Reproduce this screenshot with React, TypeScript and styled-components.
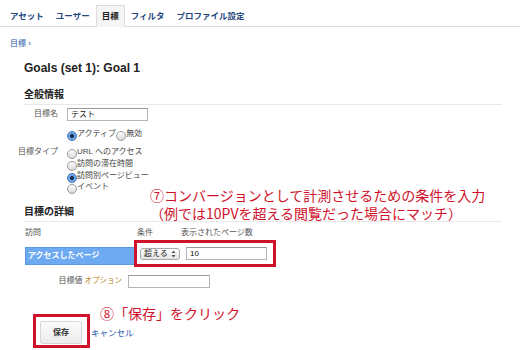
import styled, { createGlobalStyle, css } from 'styled-components';

const GlobalStyle = createGlobalStyle`
  html, body {
    margin: 0;
    padding: 0;
    background: #fff;
  }
  body {
    font-family: "Liberation Sans", "Noto Sans CJK JP", sans-serif;
    color: #333;
  }
`;

const RED = '#d0112b';
const LINK = '#2557a7';

const Page = styled.div`
  position: relative;
  width: 520px;
  height: 350px;
  overflow: hidden;
  background: #fff;
`;

const TabBar = styled.div`
  display: flex;
  align-items: flex-end;
  height: 26px;
  padding-left: 4px;
  border-bottom: 1px solid #dcdcdc;
`;

const Tab = styled.div<{ $active?: boolean }>`
  height: 20px;
  line-height: 20px;
  padding: 0 5px;
  font-size: 8.5px;
  font-weight: bold;
  color: #24467f;
  border: 1px solid transparent;
  border-bottom: none;
  ${(p) =>
    p.$active &&
    css`
      color: #222;
      background: #f5f5f5;
      border-color: #dcdcdc;
      margin-bottom: -1px;
      height: 21px;
    `}
`;

const Breadcrumb = styled.div`
  margin: 12px 0 0 10px;
  font-size: 8px;
  line-height: 10px;
  color: ${LINK};
`;

const Title = styled.h1`
  margin: 12px 0 0 24px;
  font-size: 12px;
  line-height: 14px;
  font-weight: bold;
  color: #222;
`;

const SectionHeading = styled.h2<{ $top: number }>`
  margin: ${(p) => p.$top}px 18px 0 24px;
  padding-bottom: 3px;
  font-size: 10px;
  line-height: 12px;
  font-weight: bold;
  color: #222;
  border-bottom: 1px solid #e8e8e8;
`;

const FormRow = styled.div<{ $top: number; $labelWidth?: number; $gap?: number }>`
  display: grid;
  grid-template-columns: ${(p) => p.$labelWidth ?? 58}px 1fr;
  column-gap: ${(p) => p.$gap ?? 9}px;
  align-items: start;
  margin-top: ${(p) => p.$top}px;
`;

const Label = styled.div`
  font-size: 8px;
  line-height: 12px;
  color: #555;
  text-align: right;
  white-space: nowrap;
`;

const TextInput = styled.div<{ $width: number }>`
  width: ${(p) => p.$width}px;
  height: 11px;
  border: 1px solid #b5b5b5;
  border-top-color: #999;
  background: #fff;
  font-size: 8px;
  line-height: 11px;
  padding-left: 3px;
  color: #111;
  box-sizing: content-box;
`;

const RadioGroup = styled.div<{ $inline?: boolean }>`
  display: flex;
  flex-direction: ${(p) => (p.$inline ? 'row' : 'column')};
`;

const RadioItem = styled.div`
  display: flex;
  align-items: flex-end;
  height: 11.7px;
  font-size: 8px;
  line-height: 10px;
  color: #444;
  white-space: nowrap;
`;

const RadioDot = styled.span<{ $checked?: boolean }>`
  width: 8px;
  height: 8px;
  border-radius: 50%;
  border: 1px solid #9a9a9a;
  background: linear-gradient(#ffffff, #d8d8d8);
  margin-bottom: -2px;
  flex: none;
  ${(p) =>
    p.$checked &&
    css`
      border-color: #3f6fb0;
      background: radial-gradient(circle, #1d2f4a 0 1.6px, #5c9de6 2.2px, #8fc0f5 100%);
    `}
`;

const DetailHeader = styled.div`
  display: flex;
  margin: 5px 0 0 25px;
  font-size: 8px;
  line-height: 11px;
  color: #555;
`;

const HeaderCell = styled.div<{ $width: number }>`
  width: ${(p) => p.$width}px;
  flex: none;
`;

const DetailRow = styled.div`
  display: flex;
  align-items: center;
  margin: 2px 0 0 25px;
`;

const PageTypeBar = styled.div`
  width: 106px;
  height: 16px;
  padding-left: 2px;
  background: #6eaaf2;
  border: 1px solid #5d97df;
  color: #fff;
  font-size: 8px;
  font-weight: bold;
  line-height: 16px;
  box-sizing: content-box;
  margin-top: 4px;
`;

const Highlight = styled.div`
  display: flex;
  align-items: center;
  gap: 6px;
  width: 131px;
  height: 21px;
  padding: 0 2px 0 3px;
  border: 3px solid ${RED};
  margin-left: -1px;
  box-sizing: content-box;
`;

const Select = styled.div`
  display: flex;
  align-items: center;
  justify-content: space-between;
  width: 32px;
  height: 10px;
  padding: 0 3px;
  border: 1px solid #a8a8a8;
  border-radius: 3px;
  background: linear-gradient(#ffffff, #e4e4e4);
  font-size: 8px;
  line-height: 10px;
  color: #222;
  box-sizing: content-box;
  margin-top: 1px;
`;

const OptionalTag = styled.span`
  color: #b57d10;
  font-size: 7.5px;
  margin-left: 2px;
`;

const SaveRow = styled.div`
  display: flex;
  align-items: center;
  margin: 26px 0 0 33px;
`;

const SaveFrame = styled.div`
  padding: 4px 5px 1px 4px;
  border: 3px solid ${RED};
`;

const SaveButton = styled.div`
  width: 40px;
  height: 21px;
  border: 1px solid #d6d6d6;
  border-radius: 2px;
  background: linear-gradient(#fbfbfb, #ececec);
  font-size: 8px;
  font-weight: bold;
  line-height: 21px;
  text-align: center;
  color: #333;
`;

const CancelLink = styled.span`
  margin: 2px 0 0 1px;
  font-size: 8.5px;
  color: ${LINK};
`;

const Callout = styled.div<{ $left: number; $top: number }>`
  position: absolute;
  left: ${(p) => p.$left}px;
  top: ${(p) => p.$top}px;
  font-family: "Noto Sans CJK JP", sans-serif;
  font-size: 14px;
  line-height: 18px;
  color: ${RED};
  white-space: nowrap;
`;

function Radio({ checked, label }: { checked?: boolean; label: string }) {
  return (
    <RadioItem>
      <RadioDot $checked={checked} />
      <span>{label}</span>
    </RadioItem>
  );
}

const tabs = ['アセット', 'ユーザー', '目標', 'フィルタ', 'プロファイル設定'];

export default function App() {
  return (
    <Page>
      <GlobalStyle />
      <TabBar>
        {tabs.map((t) => (
          <Tab key={t} $active={t === '目標'}>
            {t}
          </Tab>
        ))}
      </TabBar>

      <Breadcrumb>目標 ›</Breadcrumb>
      <Title>Goals (set 1): Goal 1</Title>

      <SectionHeading $top={14}>全般情報</SectionHeading>
      <FormRow $top={3}>
        <Label>目標名</Label>
        <TextInput $width={76}>テスト</TextInput>
      </FormRow>
      <FormRow $top={6}>
        <span />
        <RadioGroup $inline>
          <Radio checked label="アクティブ" />
          <Radio label="無効" />
        </RadioGroup>
      </FormRow>
      <FormRow $top={7}>
        <Label>目標タイプ</Label>
        <RadioGroup>
          <Radio label="URL へのアクセス" />
          <Radio label="訪問の滞在時間" />
          <Radio checked label="訪問別ページビュー" />
          <Radio label="イベント" />
        </RadioGroup>
      </FormRow>

      <SectionHeading $top={14}>目標の詳細</SectionHeading>
      <DetailHeader>
        <HeaderCell $width={112}>訪問</HeaderCell>
        <HeaderCell $width={44}>条件</HeaderCell>
        <HeaderCell $width={100}>表示されたページ数</HeaderCell>
      </DetailHeader>
      <DetailRow>
        <PageTypeBar>アクセスしたページ</PageTypeBar>
        <Highlight>
          <Select>
            <span>超える</span>
            <svg width="5" height="8" viewBox="0 0 5 8">
              <path d="M2.5 0.5 L4.5 3 H0.5 Z M2.5 7.5 L4.5 5 H0.5 Z" fill="#555" />
            </svg>
          </Select>
          <TextInput $width={76}>10</TextInput>
        </Highlight>
      </DetailRow>
      <FormRow $top={8} $labelWidth={122} $gap={6}>
        <Label>
          目標値<OptionalTag>オプション</OptionalTag>
        </Label>
        <TextInput $width={77} />
      </FormRow>

      <SaveRow>
        <SaveFrame>
          <SaveButton>保存</SaveButton>
        </SaveFrame>
        <CancelLink>キャンセル</CancelLink>
      </SaveRow>

      <Callout $left={150} $top={186}>
        ⑦コンバージョンとして計測させるための条件を入力
        <br />
        （例では10PVを超える閲覧だった場合にマッチ）
      </Callout>
      <Callout $left={100} $top={304}>
        ⑧「保存」をクリック
      </Callout>
    </Page>
  );
}
